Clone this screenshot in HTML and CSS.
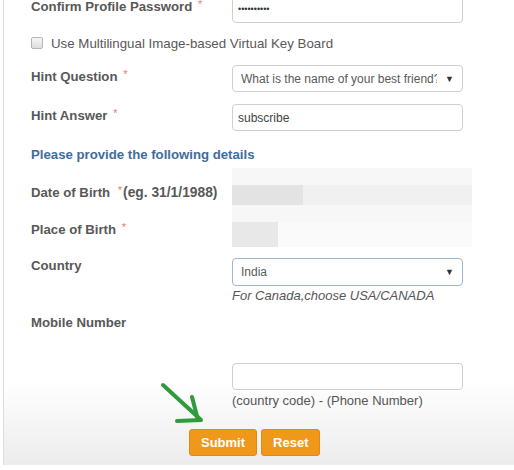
FILE: index.html
```html
<!DOCTYPE html>
<html>
<head>
<meta charset="utf-8">
<link rel="stylesheet" href="styles.css">
</head>
<body>
<div class="page">
  <form class="form">
    <div class="row row-pass">
      <label class="lbl">Confirm Profile Password <span class="req">*</span></label>
      <div class="field"><div class="input pass">••••••••••</div></div>
    </div>
    <div class="check-row">
      <span class="checkbox"></span>
      <span class="check-text">Use Multilingual Image-based Virtual Key Board</span>
    </div>
    <div class="row row-q">
      <label class="lbl">Hint Question <span class="req">*</span></label>
      <div class="field"><div class="input select"><span class="sel-text">What is the name of your best friend?</span><span class="caret">▼</span></div></div>
    </div>
    <div class="row row-a">
      <label class="lbl">Hint Answer <span class="req">*</span></label>
      <div class="field"><div class="input plain">subscribe</div></div>
    </div>
    <h3 class="section">Please provide the following details</h3>
    <div class="blur-wrap">
      <div class="blur-labels">
        <div class="lbl lbl-dob">Date of Birth <span class="req req-tight">*</span><span class="eg">(eg. 31/1/1988)</span></div>
        <div class="lbl lbl-pob">Place of Birth <span class="req">*</span></div>
      </div>
      <div class="blur">
        <div class="blur-band1"></div>
        <div class="blur-band2"><span class="blk blk1"></span></div>
        <div class="blur-band3"></div>
        <div class="blur-band4"><span class="blk blk2"></span></div>
      </div>
    </div>
    <div class="row row-c">
      <label class="lbl">Country</label>
      <div class="field">
        <div class="input select focus"><span class="sel-text">India</span><span class="caret">▼</span></div>
        <div class="help italic">For Canada,choose USA/CANADA</div>
      </div>
    </div>
    <div class="row row-m">
      <label class="lbl">Mobile Number</label>
    </div>
    <div class="row row-phone">
      <div></div>
      <div class="field">
        <div class="input plain"></div>
        <div class="help">(country code) - (Phone Number)</div>
      </div>
    </div>
    <div class="buttons">
      <button type="button" class="btn">Submit</button>
      <button type="button" class="btn">Reset</button>
    </div>
  </form>
  <svg class="arrow" width="60" height="50" viewBox="0 0 60 50">
    <g stroke="#2f9b3c" stroke-width="4" stroke-linecap="round" fill="none">
      <path d="M5 4 L42 38"/>
      <path d="M34 16 L40 39"/>
      <path d="M19 40 L43 39"/>
    </g>
  </svg>
</div>
</body>
</html>
```
FILE: styles.css
```css
* { box-sizing: border-box; }
html, body { margin: 0; padding: 0; }
body {
  width: 514px;
  height: 470px;
  overflow: hidden;
  font-family: "Liberation Sans", Arial, sans-serif;
  background: #fff;
}
.page {
  position: relative;
  height: 470px;
  margin-left: 3px;
  border-left: 1px solid #dcdcdc;
  background: linear-gradient(to bottom, #ffffff 0, #ffffff 385px, #ececec 470px);
  padding-left: 27px;
}
.form { margin-top: -5px; }
.row {
  display: grid;
  grid-template-columns: 201px 231px;
  align-items: start;
}
.lbl {
  font-size: 13.2px;
  font-weight: bold;
  color: #585858;
  line-height: 16px;
  padding-top: 4px;
  white-space: nowrap;
}
.req {
  color: #e87a7a;
  font-weight: normal;
  font-size: 11px;
  line-height: 0;
  vertical-align: 3px;
  margin-left: 2px;
}
.req-tight { margin-left: 4px; margin-right: 1px; }
.eg { font-size: 13.8px; }
.input {
  height: 27px;
  border: 1px solid #cfcfcf;
  border-radius: 4px;
  background: #fff;
  font-size: 12px;
  color: #444;
  padding: 0 5px;
  display: flex;
  align-items: center;
}
.pass { height: 28px; font-size: 9px; color: #333; }
.select { padding: 0 8px 0 8px; justify-content: space-between; }
.sel-text { white-space: nowrap; overflow: hidden; width: 196px; color: #5a5a5a; }
.caret { font-size: 9px; color: #333; }
.focus { border-color: #9cb8d0; height: 28px; }
.check-row {
  display: flex;
  align-items: center;
  margin-top: 12px;
  height: 16px;
}
.checkbox {
  width: 12px;
  height: 12px;
  border: 1px solid #b5b5b5;
  border-radius: 2px;
  background: linear-gradient(#f6f6f6, #dedede);
  margin-right: 8px;
}
.check-text { font-size: 13.3px; color: #585858; }
.row-q { margin-top: 14px; }
.row-a { margin-top: 12px; }
.section {
  margin: 16px 0 0;
  font-size: 13.2px;
  font-weight: bold;
  color: #3f6d9b;
  line-height: 16px;
}
.blur-wrap {
  display: grid;
  grid-template-columns: 201px 240px;
  margin-top: 5px;
}
.blur-labels { padding-top: 13px; }
.lbl-pob { margin-top: 17px; }
.blur { display: flex; flex-direction: column; height: 79px; }
.blur-band1 { height: 17px; background: #f7f7f7; }
.blur-band2 { height: 20px; background: #f0f0f0; display: flex; }
.blur-band3 { height: 17px; background: #f7f7f7; }
.blur-band4 { height: 25px; background: #fafafa; display: flex; }
.blk { display: block; height: 100%; }
.blk1 { width: 71px; background: #e3e3e3; }
.blk2 { width: 46px; background: #e8e8e8; }
.row-c { margin-top: 11px; }
.row-c .lbl { padding-top: 0; }
.help { font-size: 13px; color: #555; margin-top: 2px; line-height: 16px; }
.italic { font-style: italic; }
.row-m { margin-top: 7px; }
.row-phone { margin-top: 32px; }
.row-phone .help { margin-top: 3px; }
.buttons {
  display: flex;
  gap: 4px;
  margin: 20px 0 0 158px;
}
.btn {
  height: 27px;
  border: 1px solid #e08a10;
  border-radius: 3px;
  background: #f0981a;
  color: #fff;
  font-family: "Liberation Sans", Arial, sans-serif;
  font-weight: bold;
  font-size: 13px;
  padding: 0 11px;
}
.arrow {
  position: absolute;
  left: 154px;
  top: 386px;
}
```
